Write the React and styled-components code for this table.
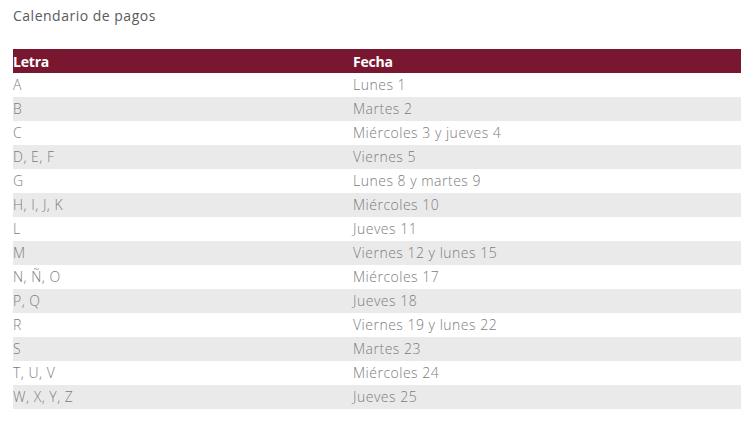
import React from "react";
import styled, { createGlobalStyle } from "styled-components";

const rows = [
  ["A", "Lunes 1"],
  ["B", "Martes 2"],
  ["C", "Miércoles 3 y jueves 4"],
  ["D, E, F", "Viernes 5"],
  ["G", "Lunes 8 y martes 9"],
  ["H, I, J, K", "Miércoles 10"],
  ["L", "Jueves 11"],
  ["M", "Viernes 12 y lunes 15"],
  ["N, Ñ, O", "Miércoles 17"],
  ["P, Q", "Jueves 18"],
  ["R", "Viernes 19 y lunes 22"],
  ["S", "Martes 23"],
  ["T, U, V", "Miércoles 24"],
  ["W, X, Y, Z", "Jueves 25"],
];

const GlobalStyle = createGlobalStyle`
  body {
    margin: 0;
    background: #fff;
    font-family: "Open Sans", "Liberation Sans", sans-serif;
  }
`;

const Page = styled.div`
  padding: 7px 15px 0 13px;
`;

const Title = styled.h4`
  margin: 0 0 25px;
  font-size: 14px;
  line-height: 17px;
  font-weight: 400;
  letter-spacing: 0.5px;
  color: #5a5a5a;
`;

const Table = styled.table`
  width: 728px;
  border-collapse: collapse;
  table-layout: fixed;
`;

const HeadCell = styled.th`
  background: #7a1730;
  color: #fff;
  font-weight: 700;
  font-size: 14px;
  text-align: left;
  height: 24px;
  padding: 0;
  width: ${(p) => p.$w || "auto"};
  letter-spacing: -0.2px;
`;

const Row = styled.tr`
  background: ${(p) => (p.$striped ? "#ebeaeb" : "#fff")};
`;

const Cell = styled.td`
  color: #7c7c7c;
  font-weight: 300;
  font-size: 14px;
  line-height: 23px;
  height: 24px;
  padding: 0;
  vertical-align: top;
  letter-spacing: 0.5px;
  white-space: nowrap;
`;

export default function App() {
  return (
    <>
      <GlobalStyle />
      <Page>
        <Title>Calendario de pagos</Title>
        <Table>
          <thead>
            <tr>
              <HeadCell $w="340px">Letra</HeadCell>
              <HeadCell>Fecha</HeadCell>
            </tr>
          </thead>
          <tbody>
            {rows.map(([letra, fecha], i) => (
              <Row key={letra} $striped={i % 2 === 1}>
                <Cell>{letra}</Cell>
                <Cell>{fecha}</Cell>
              </Row>
            ))}
          </tbody>
        </Table>
      </Page>
    </>
  );
}
